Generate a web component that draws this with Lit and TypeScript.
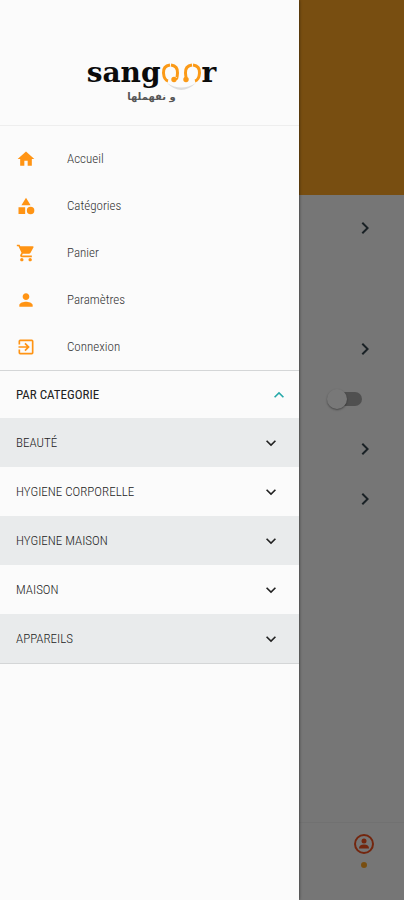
import { LitElement, html, css, svg } from "lit";
import { customElement, property, state } from "lit/decorators.js";
import { classMap } from "lit/directives/class-map.js";

const ICONS: Record<string, string> = {
  home: "M10 20v-6h4v6h5v-8h3L12 3 2 12h3v8z",
  category: "M12 2l5.5 9h-11zM17.500 13a4.500 4.500 0 1 1 0 9a4.500 4.500 0 1 1 0-9zM3 13.500h8v8H3z",
  cart: "M7 18c-1.100 0-1.990.9-1.990 2S5.900 22 7 22s2-.9 2-2-.9-2-2-2zM1 2v2h2l3.600 7.590-1.350 2.450c-.16.28-.25.61-.25.96 0 1.100.9 2 2 2h12v-2H7.420c-.14 0-.25-.11-.25-.25l.03-.12.9-1.630h7.450c.75 0 1.410-.41 1.750-1.030l3.580-6.490A1 1 0 0 0 20 4H5.210l-.94-2H1zm16 16c-1.100 0-1.990.9-1.990 2s.89 2 1.990 2 2-.9 2-2-.9-2-2-2z",
  person: "M12 12c2.210 0 4-1.790 4-4s-1.790-4-4-4-4 1.790-4 4 1.790 4 4 4zm0 2c-2.670 0-8 1.340-8 4v2h16v-2c0-2.660-5.330-4-8-4z",
  login: "M10.090 15.590L11.500 17l5-5-5-5-1.410 1.410L12.670 11H3v2h9.670l-2.580 2.590zM19 3H5a2 2 0 0 0-2 2v4h2V5h14v14H5v-4H3v4a2 2 0 0 0 2 2h14a2 2 0 0 0 2-2V5a2 2 0 0 0-2-2z",
  down: "M7.410 8.590L12 13.170l4.590-4.580L18 10l-6 6-6-6z",
  up: "M7.410 15.410L12 10.830l4.590 4.580L18 14l-6-6-6 6z",
  right: "M8.590 16.590L13.170 12 8.590 7.410 10 6l6 6-6 6z",
};

@customElement("app-icon")
class AppIcon extends LitElement {
  @property() name = "home";
  static styles = css`
    :host { display: block; width: 20px; height: 20px; flex: none; }
    svg { display: block; width: 100%; height: 100%; fill: currentColor; }
  `;
  render() {
    return html`<svg viewBox="0 0 24 24" aria-hidden="true">${svg`<path d=${ICONS[this.name]} />`}</svg>`;
  }
}

@customElement("brand-logo")
class BrandLogo extends LitElement {
  static styles = css`
    :host { display: flex; flex-direction: column; align-items: center; gap: 1px; color: #0b0b0b; }
    .word { display: flex; align-items: flex-end; font: 700 28px/32px "DejaVu Serif", serif; }
    .eyes { width: 41px; height: 28px; overflow: visible; }
    .tag { font: 700 10px/14px "DejaVu Sans", sans-serif; color: #555; }
  `;
  render() {
    return html`
      <div class="word">
        <span>sang</span>
        <svg class="eyes" viewBox="0 0 41 28" aria-hidden="true">
          <path d="M6 22Q20 31 35 22Q20 36 6 22" fill="#ddd" />
          <g fill="none" stroke="#fb9a17">
            <path d="M9 4Q2 5 2.500 12T7 20" stroke-width="3" />
            <path d="M10 4Q17 5 16.500 12T15 17" stroke-width="3" />
            <path d="M31 4Q24 5 24.500 12T26 17" stroke-width="3" />
            <path d="M32 4Q39 5 38.500 12T34 20" stroke-width="3" />
          </g>
          <circle cx="13" cy="18.500" r="2.700" fill="#fb9a17" />
          <circle cx="25" cy="18.500" r="2.700" fill="#fb9a17" />
        </svg>
        <span>r</span>
      </div>
      <div class="tag" dir="rtl" lang="ar">و نفهملها</div>
    `;
  }
}

@customElement("app-root")
class AppRoot extends LitElement {
  @state() private expanded = true;

  private links = [
    ["home", "Accueil"],
    ["category", "Catégories"],
    ["cart", "Panier"],
    ["person", "Paramètres"],
    ["login", "Connexion"],
  ];
  private categories = ["BEAUTÉ", "HYGIENE CORPORELLE", "HYGIENE MAISON", "MAISON", "APPAREILS"];

  static styles = css`
    :host { display: block; position: relative; min-height: 100vh; font: 300 13px/20px "Roboto Condensed", "Liberation Sans Narrow", "Liberation Sans", sans-serif; }
    * { box-sizing: border-box; }
    button { font: inherit; color: inherit; border: 0; background: none; padding: 0; margin: 0; text-align: left; }
    .page { min-height: 100vh; display: flex; flex-direction: column; background: #fafafa; }
    .banner { height: 195px; background: #ffa726; }
    .row { display: flex; align-items: center; justify-content: flex-end; width: 100%; height: 50px; padding-right: 27px; color: #37474f; }
    .row.tall { height: 66px; margin-bottom: 63px; }
    .row app-icon { width: 24px; height: 24px; }
    .switch { appearance: none; display: flex; align-items: center; width: 34px; height: 14px; margin: 0 15px 0 0; border-radius: 7px; background: #aaa; }
    .switch::before { content: ""; width: 20px; height: 20px; margin-left: -1px; border-radius: 50%; background: #fff; box-shadow: 0 1px 2px #0006; }
    .tabs { display: flex; justify-content: flex-end; height: 78px; margin-top: auto; padding: 11px 30px 0 0; border-top: 1px solid #f1f1f1; }
    .tab { display: flex; flex-direction: column; align-items: center; gap: 8px; height: 34px; }
    .tab svg { width: 20px; height: 20px; }
    .dot { width: 6px; height: 6px; border-radius: 50%; background: #ffa726; }
    .scrim { position: absolute; inset: 0; background: rgba(0, 0, 0, 0.53); }
    .drawer { position: absolute; inset: 0 auto 0 0; width: 74%; background: #fbfbfb; box-shadow: 0 0 3px #000a; }
    .head { display: flex; justify-content: center; height: 126px; padding: 57px 0 0 4px; border-bottom: 1px solid #eee; }
    .links { padding-top: 9px; }
    .link { display: flex; align-items: center; gap: 31px; height: 47px; padding: 0 16px; color: #333; text-decoration: none; }
    .link app-icon { color: #ff9414; }
    .cats { border: solid #d4d6d7; border-width: 1px 0; }
    .cat { display: flex; align-items: center; justify-content: space-between; width: 100%; height: 49px; padding: 0 18px 0 16px; color: #222; }
    .cat.shade { background: #e9ebec; }
    .cat.top { height: 47px; padding-right: 10px; font-weight: 400; }
    .cat.top app-icon { color: #26a9a9; }
  `;

  render() {
    return html`
      <main class="page">
        <div class="banner"></div>
        <button class="row tall" aria-label="Profil"><app-icon name="right"></app-icon></button>
        <button class="row" aria-label="Langue"><app-icon name="right"></app-icon></button>
        <div class="row"><input class="switch" type="checkbox" role="switch" aria-label="Notifications" /></div>
        <button class="row" aria-label="Aide"><app-icon name="right"></app-icon></button>
        <button class="row" aria-label="Conditions"><app-icon name="right"></app-icon></button>
        <nav class="tabs">
          <button class="tab" aria-label="Compte">
            <svg viewBox="0 0 20 20" aria-hidden="true">
              <circle cx="10" cy="10" r="9" fill="none" stroke="#f4511e" stroke-width="2" />
              <circle cx="10" cy="7" r="2.500" fill="#f4511e" />
              <path d="M5 14.500q0-4 5-4t5 4z" fill="#f4511e" />
            </svg>
            <span class="dot"></span>
          </button>
        </nav>
      </main>
      <div class="scrim"></div>
      <aside class="drawer">
        <header class="head"><brand-logo></brand-logo></header>
        <nav class="links">
          ${this.links.map(([icon, label]) => html`<a class="link" href="#"><app-icon name=${icon}></app-icon>${label}</a>`)}
        </nav>
        <section class="cats">
          <button class="cat top" aria-expanded=${this.expanded} @click=${() => (this.expanded = !this.expanded)}>
            PAR CATEGORIE<app-icon name=${this.expanded ? "up" : "down"}></app-icon>
          </button>
          ${this.expanded
            ? this.categories.map(
                (c, i) => html`<button class=${classMap({ cat: true, shade: i % 2 === 0 })}>${c}<app-icon name="down"></app-icon></button>`
              )
            : ""}
        </section>
      </aside>
    `;
  }
}
